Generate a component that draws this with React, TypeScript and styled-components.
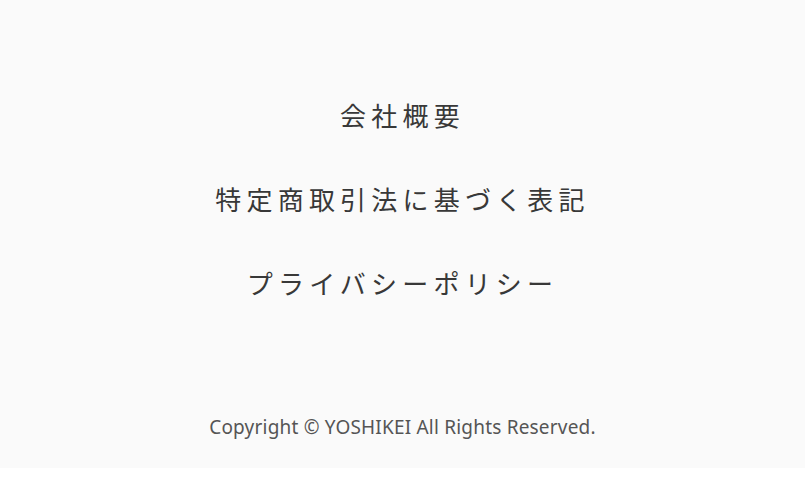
import { FunctionComponent } from 'react';
import styled, { createGlobalStyle } from 'styled-components';

const links = ['会社概要', '特定商取引法に基づく表記', 'プライバシーポリシー'];

const App: FunctionComponent = () => {
  return (
    <>
      <GlobalStyle />
      <StyledFooter>
        <NavList>
          {links.map((label) => (
            <NavItem key={label}>
              <NavLink href="#">{label}</NavLink>
            </NavItem>
          ))}
        </NavList>
        <Copyright>Copyright © YOSHIKEI All Rights Reserved.</Copyright>
      </StyledFooter>
    </>
  );
};

const GlobalStyle = createGlobalStyle`
  * {
    box-sizing: border-box;
  }
  body {
    margin: 0;
    background-color: #ffffff;
    font-family: "Noto Sans", "Noto Sans CJK JP", sans-serif;
  }
`;

const StyledFooter = styled.footer`
  display: flex;
  flex-direction: column;
  align-items: center;
  height: 468px;
  padding: 95px 0 27px;
  background-color: #fafafa;
`;

const NavList = styled.ul`
  display: flex;
  flex-direction: column;
  align-items: center;
  gap: 44px;
  margin: 0;
  padding: 0;
  list-style: none;
`;

const NavItem = styled.li`
  display: block;
`;

const NavLink = styled.a`
  display: block;
  font-family: "Noto Sans CJK JP", sans-serif;
  font-size: 26px;
  line-height: 40px;
  letter-spacing: 0.2em;
  color: #383838;
  text-decoration: none;
`;

const Copyright = styled.p`
  margin: auto 0 0;
  font-family: "Noto Sans", "Noto Sans CJK JP", sans-serif;
  font-size: 19px;
  line-height: 27px;
  letter-spacing: 0.2px;
  color: #555555;
`;

export default App;
